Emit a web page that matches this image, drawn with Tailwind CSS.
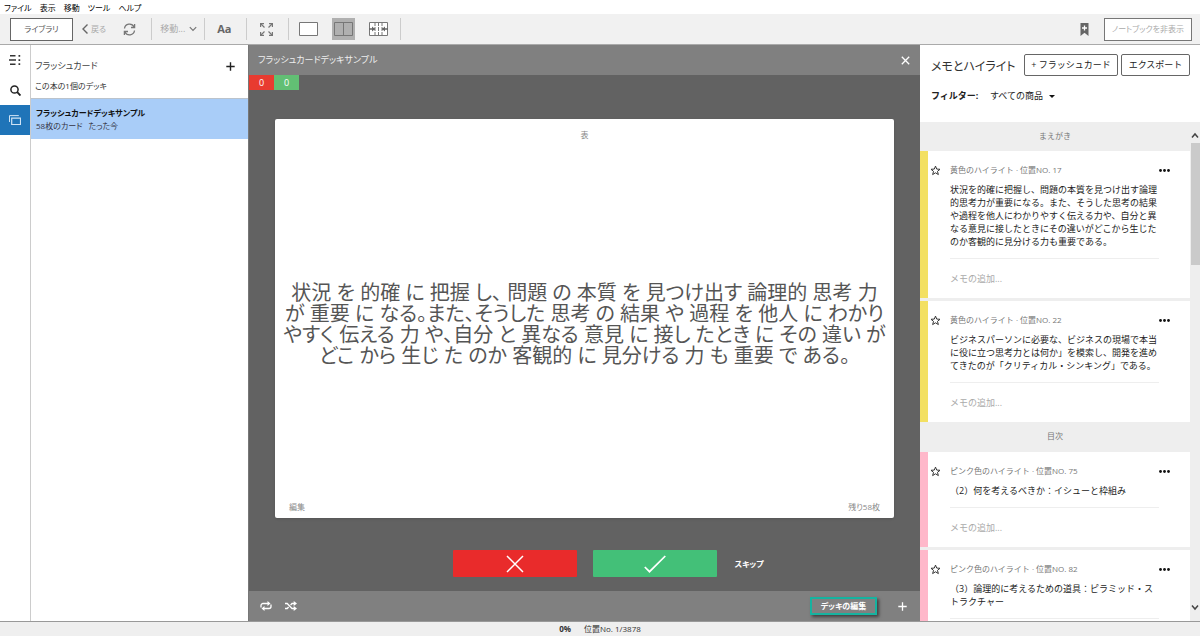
<!DOCTYPE html>
<html lang="ja">
<head>
    <meta charset="UTF-8">
    <meta name="viewport" content="width=device-width, initial-scale=1.0">
    <title>フラッシュカードデッキサンプル</title>
    <script src="https://cdn.jsdelivr.net/npm/@tailwindcss/browser@4"></script>
</head>
<body class="h-screen flex flex-col overflow-hidden bg-white text-[#333] text-[9px] leading-[14px] font-['Open_Sans','Noto_Sans_CJK_JP',sans-serif] [font-feature-settings:'palt']">

    <!-- Menu bar -->
    <nav class="h-[14px] shrink-0 flex items-center gap-2 px-1 pt-[2px] text-[8px] text-black">
        <button type="button">ファイル</button>
        <button type="button">表示</button>
        <button type="button">移動</button>
        <button type="button">ツール</button>
        <button type="button">ヘルプ</button>
    </nav>

    <!-- Toolbar -->
    <header class="h-[31px] shrink-0 flex items-center bg-[#f1f1f1] border-b border-[#aaa] pl-[10px] pr-2">
        <button type="button" class="w-[63px] h-[23px] border border-[#666] bg-white text-[8px] text-[#555]">ライブラリ</button>
        <button type="button" class="ml-2 flex items-center gap-[2px] text-[8px] text-[#aaa]">
            <svg class="w-2 h-3" viewBox="0 0 8 12" fill="none" stroke="#666" stroke-width="1.4"><path d="M6.5 1.5 2 6l4.500 4.500"/></svg>
            戻る
        </button>
        <button type="button" aria-label="同期" class="ml-[17px]">
            <svg class="w-[13px] h-[13px]" viewBox="0 0 13 13" fill="none" stroke="#777" stroke-width="1.300"><path d="M1.500 5.500A5 5 0 0 1 11 4M11.500 7.500A5 5 0 0 1 2 9"/><path d="M11.600 1v3.500H8M1.400 12V8.500H5"/></svg>
        </button>
        <span class="ml-[15px] w-px h-[22px] bg-[#ccc]"></span>
        <button type="button" aria-haspopup="menu" class="ml-2 flex items-center gap-1 text-[#aaa]">
            移動...
            <svg class="w-2 h-2" viewBox="0 0 8 8" fill="none" stroke="#777" stroke-width="1.200"><path d="M.8 2.200 4 5.500l3.200-3.300"/></svg>
        </button>
        <span class="ml-[7px] w-px h-[22px] bg-[#ccc]"></span>
        <button type="button" class="ml-3 text-[11px] font-bold text-[#666]">Aa</button>
        <span class="ml-[14px] w-px h-[22px] bg-[#ccc]"></span>
        <button type="button" aria-label="全画面表示" class="ml-[13px]">
            <svg class="w-[13px] h-[13px]" viewBox="0 0 13 13" fill="none" stroke="#777" stroke-width="1.200"><path d="m1 1 3.500 3.500M12 1 8.500 4.500M12 12 8.500 8.500M1 12l3.500-3.500"/><path d="M5 2v3H2M8 2v3h3M8 11V8h3M5 11V8H2" stroke="none"/><path d="M.6 4V.6H4M9 .6h3.400V4M12.400 9v3.400H9M4 12.400H.6V9"/></svg>
        </button>
        <span class="ml-[15px] w-px h-[22px] bg-[#ccc]"></span>
        <button type="button" aria-label="1列" class="ml-[10px]">
            <svg class="w-[19px] h-[14px]" viewBox="0 0 19 14" fill="#fff" stroke="#777"><path d="M.5.5h18v13H.5z"/></svg>
        </button>
        <button type="button" aria-label="2列" class="ml-[14px] w-[23px] h-[22px] flex items-center justify-center bg-[#b0b0b0]">
            <svg class="w-[19px] h-[14px]" viewBox="0 0 19 14" fill="none" stroke="#777"><path d="M.5.5h18v13H.5zM9.500.5v13"/></svg>
        </button>
        <button type="button" aria-label="自動" class="ml-[14px]">
            <svg class="w-[19px] h-[14px]" viewBox="0 0 19 14" fill="none" stroke="#777"><path d="M.5.5h18v13H.5z" fill="#fff"/><path d="M6 0v14M9.500 0v14M13 0v14" stroke-dasharray="4 1"/><path d="M0 7h6M13 7h6" stroke="#666" stroke-width="1.300"/><path d="M3 4.500 6 7 3 9.500zM16 4.500 13 7l3 2.500z" fill="#666" stroke="none"/></svg>
        </button>
        <span class="ml-3 w-px h-[22px] bg-[#ccc]"></span>
        <button type="button" aria-label="ブックマーク" class="ml-auto">
            <svg class="w-[9px] h-[13px]" viewBox="0 0 9 13"><path d="M.5 0h8v13l-4-3.200L.5 13z" fill="#666"/><path d="M4.500 2.500v5M2 5h5" stroke="#fff" stroke-width="1.300"/></svg>
        </button>
        <button type="button" class="ml-[15px] w-[88px] h-[23px] border border-[#777] bg-white text-[8px] text-[#aaa]">ノートブックを非表示</button>
    </header>

    <main class="flex-1 min-h-0 flex">
        <!-- Icon rail -->
        <nav class="w-[31px] shrink-0 flex flex-col border-r border-[#ccc]">
            <button type="button" aria-label="目次" class="h-[30px] flex items-center justify-center">
                <svg class="w-3 h-[10px]" viewBox="0 0 12 10" fill="#333"><path d="M1 0h5.500v1.500H1zM0 4.200h7v1.500H0zM1 8.400h5.500v1.500H1zM9.500 0h1.700v1.700H9.500zM9.500 4.200h1.700v1.700H9.500zM9.500 8.300h1.700V10H9.500z"/></svg>
            </button>
            <button type="button" aria-label="検索" class="h-[30px] flex items-center justify-center">
                <svg class="w-[11px] h-[11px]" viewBox="0 0 11 11" fill="none" stroke="#222" stroke-width="1.500"><circle cx="4.500" cy="4.500" r="3.600"/><path d="m7.200 7.200 3.300 3.300" stroke-width="1.900"/></svg>
            </button>
            <button type="button" aria-label="フラッシュカード" class="h-[30px] flex items-center justify-center bg-[#1f74b8]">
                <svg class="w-3 h-[10px]" viewBox="0 0 12 10" fill="none" stroke="#cfe3f5"><path d="M2.700 3.200h8.800v6.300H2.700z" stroke-width="1.200"/><path d="M.5 7V.6h9.300"/></svg>
            </button>
        </nav>

        <!-- Deck list -->
        <aside class="w-[218px] shrink-0 flex flex-col border-r border-[#777]">
            <div class="h-[53px] px-1 pt-[14px]">
                <div class="flex items-center justify-between pr-[9px]">
                    <h2 class="text-[9px] text-[#444]">フラッシュカード</h2>
                    <button type="button" aria-label="デッキを追加">
                        <svg class="w-[9px] h-[9px]" viewBox="0 0 9 9" stroke="#222" stroke-width="1.400"><path d="M4.500.3v8.400M.3 4.500h8.400"/></svg>
                    </button>
                </div>
                <p class="mt-[6px] text-[8px]">この本の1個のデッキ</p>
            </div>
            <a href="#deck" class="h-[41px] block bg-[#a9cdf8] border-t border-[#bbc3cc] px-[5px] pt-[7px] leading-[13px]">
                <strong class="block text-[8px] font-bold text-[#111]">フラッシュカードデッキサンプル</strong>
                <span class="flex gap-[6px] text-[8px] text-[#334]"><span>58枚のカード</span><span>たった今</span></span>
            </a>
        </aside>

        <!-- Flashcard -->
        <section id="deck" class="flex-1 min-w-0 flex flex-col bg-[#626262]">
            <div class="h-[30px] shrink-0 flex items-center justify-between bg-[#808080] pl-[9px] pr-[10px] text-[#eee]">
                <h1 class="text-[9px]">フラッシュカードデッキサンプル</h1>
                <button type="button" aria-label="閉じる">
                    <svg class="w-[9px] h-[9px]" viewBox="0 0 9 9" stroke="#fff" stroke-width="1.300"><path d="m.8.8 7.400 7.400M8.200.8.8 8.200"/></svg>
                </button>
            </div>
            <div class="flex h-[15px] shrink-0 text-white text-center leading-[15px]">
                <span class="w-[25px] bg-[#e83b30]">0</span>
                <span class="w-[25px] bg-[#62bf74]">0</span>
            </div>
            <article class="flex-1 min-h-0 mt-[29px] mx-[26px] flex flex-col rounded-xs bg-white px-[14px] pt-[9px] pb-1 shadow-sm text-[8px] text-[#888]">
                <p class="text-center">表</p>
                <p class="flex-1 flex items-center justify-center pt-[6px] text-center text-[20px] leading-[21px] text-[#555] whitespace-nowrap">
                    <span>状況 を 的確 に 把握 し、 問題 の 本質 を 見つけ出す 論理的 思考 力<br>が 重要 に なる。また、そうした 思考 の 結果 や 過程 を 他人 に わかり<br>やすく 伝える 力 や、自分 と 異なる 意見 に 接し たとき に その 違い が<br>どこ から 生じ た のか 客観的 に 見分ける 力 も 重要 で ある。</span>
                </p>
                <div class="flex justify-between">
                    <button type="button">編集</button>
                    <span>残り58枚</span>
                </div>
            </article>
            <div class="mt-8 mb-[14px] h-[27px] shrink-0 grid grid-cols-[1fr_auto_1fr] items-center">
                <div class="col-start-2 flex gap-4">
                    <button type="button" aria-label="不正解" class="w-[124px] h-[27px] flex items-center justify-center rounded-[1px] bg-[#e92b2b]">
                        <svg class="w-[18px] h-[18px]" viewBox="0 0 18 18" stroke="#fff" stroke-width="1.500"><path d="m1 1 16 16M17 1 1 17"/></svg>
                    </button>
                    <button type="button" aria-label="正解" class="w-[124px] h-[27px] flex items-center justify-center rounded-[1px] bg-[#43c078]">
                        <svg class="w-[22px] h-[18px]" viewBox="0 0 22 18" fill="none" stroke="#fff" stroke-width="1.700"><path d="m.8 12 4.700 4.700L21.300 1"/></svg>
                    </button>
                </div>
                <button type="button" class="justify-self-start ml-[18px] text-[8px] font-bold text-white">スキップ</button>
            </div>
            <div class="h-[30px] shrink-0 flex items-center bg-[#808080] pl-[11px] pr-[13px]">
                <button type="button" aria-label="繰り返し">
                    <svg class="w-3 h-[10px]" viewBox="0 0 12 10" fill="none" stroke="#fff" stroke-width="1.300"><path d="M1 6.500V4.500a2 2 0 0 1 2-2h5M11 3.500v2a2 2 0 0 1-2 2H4"/><path d="M7.500 0 10.500 2.500 7.500 5zM4.500 5 1.500 7.500l3 2.500z" fill="#fff" stroke="none"/></svg>
                </button>
                <button type="button" aria-label="シャッフル" class="ml-[13px]">
                    <svg class="w-3 h-[10px]" viewBox="0 0 12 10" fill="none" stroke="#fff" stroke-width="1.300"><path d="M0 2.500h2.200L7 7.500h2M0 7.500h2.200L3.600 6M5.600 4 7 2.500h2"/><path d="m8.700 0 3.300 2.500L8.700 5zM8.700 5 12 7.500 8.700 10z" fill="#fff" stroke="none"/></svg>
                </button>
                <button type="button" class="ml-auto w-[67px] h-[18px] border-2 border-[#16b3a0] shadow-[2px_2px_3px_rgba(0,0,0,0.5)] text-[8px] font-bold leading-[14px] text-white">デッキの編集</button>
                <button type="button" aria-label="カードを追加" class="ml-[21px]">
                    <svg class="w-[9px] h-[9px]" viewBox="0 0 9 9" stroke="#fff" stroke-width="1.300"><path d="M4.500.3v8.400M.3 4.500h8.400"/></svg>
                </button>
            </div>
        </section>

        <!-- Notebook -->
        <aside class="w-[280px] shrink-0 flex flex-col [font-feature-settings:normal]">
            <div class="h-[77px] shrink-0 pl-[11px] pr-[10px] pt-[9px]">
                <div class="flex items-center gap-[3px]">
                    <h2 class="flex-1 pt-[3px] text-[12px] text-[#333] whitespace-nowrap [font-feature-settings:'palt']">メモとハイライト</h2>
                    <button type="button" class="w-[94px] h-[22px] rounded-[2px] border border-[#666] text-[9px] text-[#222]">+ フラッシュカード</button>
                    <button type="button" class="w-[69px] h-[22px] rounded-[2px] border border-[#666] text-[9px] text-[#222]">エクスポート</button>
                </div>
                <div class="mt-[13px] flex items-center text-[9px] text-[#222]">
                    <label for="filter" class="w-[59px] font-bold">フィルター:</label>
                    <select id="filter" class="appearance-none h-[14px]">
                        <option>すべての商品</option>
                    </select>
                    <svg class="ml-1 w-[6px] h-[3px]" viewBox="0 0 6 3" fill="#111"><path d="M0 0h6L3 3z"/></svg>
                </div>
            </div>

            <div class="flex-1 min-h-0 flex bg-[#eee]">
                <div class="flex-1 min-w-0 overflow-hidden">
                    <h3 class="h-[29px] leading-[28px] text-center text-[8px] text-[#777]">まえがき</h3>
                    <div class="flex flex-col gap-[3px]">
                        <article class="flex items-start border-l-8 border-[#f3e062] bg-white pl-[2px] pr-5 pt-3 pb-3">
                            <button type="button" aria-label="お気に入り" class="w-5 pt-[2px]">
                                <svg class="w-[11px] h-[11px]" viewBox="0 0 10 10" fill="none" stroke="#333" stroke-width=".9"><path d="m5 1 1.100 2.700 3 .2-2.300 1.900.8 2.900L5 7.100 2.400 8.700l.8-2.900L.9 3.900l3-.2z"/></svg>
                            </button>
                            <div class="w-[209px]">
                                <p class="text-[8px] text-[#777]">黄色のハイライト · 位置NO. 17</p>
                                <p class="mt-[6px] leading-[13px] text-[#222]">状況を的確に把握し、問題の本質を見つけ出す論理的思考力が重要になる。また、そうした思考の結果や過程を他人にわかりやすく伝える力や、自分と異なる意見に接したときにその違いがどこから生じたのか客観的に見分ける力も重要である。</p>
                                <input type="text" aria-label="メモ" placeholder="メモの追加..." class="block w-full mt-[10px] pt-3 h-[28px] border-t border-[#eee] placeholder:text-[#aaa] outline-none">
                            </div>
                            <button type="button" aria-label="その他" class="ml-auto pt-[6px]">
                                <svg class="w-[11px] h-[3px]" viewBox="0 0 11 3" fill="#111"><circle cx="1.500" cy="1.500" r="1.400"/><circle cx="5.500" cy="1.500" r="1.400"/><circle cx="9.500" cy="1.500" r="1.400"/></svg>
                            </button>
                        </article>
                        <article class="flex items-start border-l-8 border-[#f3e062] bg-white pl-[2px] pr-5 pt-3 pb-3">
                            <button type="button" aria-label="お気に入り" class="w-5 pt-[2px]">
                                <svg class="w-[11px] h-[11px]" viewBox="0 0 10 10" fill="none" stroke="#333" stroke-width=".9"><path d="m5 1 1.100 2.700 3 .2-2.300 1.900.8 2.900L5 7.100 2.400 8.700l.8-2.900L.9 3.900l3-.2z"/></svg>
                            </button>
                            <div class="w-[209px]">
                                <p class="text-[8px] text-[#777]">黄色のハイライト · 位置NO. 22</p>
                                <p class="mt-[6px] leading-[13px] text-[#222]">ビジネスパーソンに必要な、ビジネスの現場で本当に役に立つ思考力とは何か」を模索し、開発を進めてきたのが「クリティカル・シンキング」である。</p>
                                <input type="text" aria-label="メモ" placeholder="メモの追加..." class="block w-full mt-[10px] pt-3 h-[28px] border-t border-[#eee] placeholder:text-[#aaa] outline-none">
                            </div>
                            <button type="button" aria-label="その他" class="ml-auto pt-[6px]">
                                <svg class="w-[11px] h-[3px]" viewBox="0 0 11 3" fill="#111"><circle cx="1.500" cy="1.500" r="1.400"/><circle cx="5.500" cy="1.500" r="1.400"/><circle cx="9.500" cy="1.500" r="1.400"/></svg>
                            </button>
                        </article>
                    </div>
                    <h3 class="h-[30px] leading-[28px] text-center text-[8px] text-[#777]">目次</h3>
                    <div class="flex flex-col gap-[3px]">
                        <article class="flex items-start border-l-8 border-[#ffb8ca] bg-white pl-[2px] pr-5 pt-3 pb-3">
                            <button type="button" aria-label="お気に入り" class="w-5 pt-[2px]">
                                <svg class="w-[11px] h-[11px]" viewBox="0 0 10 10" fill="none" stroke="#333" stroke-width=".9"><path d="m5 1 1.100 2.700 3 .2-2.300 1.900.8 2.900L5 7.100 2.400 8.700l.8-2.900L.9 3.900l3-.2z"/></svg>
                            </button>
                            <div class="w-[209px]">
                                <p class="text-[8px] text-[#777]">ピンク色のハイライト · 位置NO. 75</p>
                                <p class="mt-[6px] leading-[13px] text-[#222]">（2）何を考えるべきか：イシューと枠組み</p>
                                <input type="text" aria-label="メモ" placeholder="メモの追加..." class="block w-full mt-[10px] pt-3 h-[28px] border-t border-[#eee] placeholder:text-[#aaa] outline-none">
                            </div>
                            <button type="button" aria-label="その他" class="ml-auto pt-[6px]">
                                <svg class="w-[11px] h-[3px]" viewBox="0 0 11 3" fill="#111"><circle cx="1.500" cy="1.500" r="1.400"/><circle cx="5.500" cy="1.500" r="1.400"/><circle cx="9.500" cy="1.500" r="1.400"/></svg>
                            </button>
                        </article>
                        <article class="flex items-start border-l-8 border-[#ffb8ca] bg-white pl-[2px] pr-5 pt-3 pb-3">
                            <button type="button" aria-label="お気に入り" class="w-5 pt-[2px]">
                                <svg class="w-[11px] h-[11px]" viewBox="0 0 10 10" fill="none" stroke="#333" stroke-width=".9"><path d="m5 1 1.100 2.700 3 .2-2.300 1.900.8 2.900L5 7.100 2.400 8.700l.8-2.900L.9 3.900l3-.2z"/></svg>
                            </button>
                            <div class="w-[209px]">
                                <p class="text-[8px] text-[#777]">ピンク色のハイライト · 位置NO. 82</p>
                                <p class="mt-[6px] leading-[13px] text-[#222]">（3）論理的に考えるための道具：ピラミッド・ストラクチャー</p>
                                <input type="text" aria-label="メモ" placeholder="メモの追加..." class="block w-full mt-[10px] pt-3 h-[28px] border-t border-[#eee] placeholder:text-[#aaa] outline-none">
                            </div>
                            <button type="button" aria-label="その他" class="ml-auto pt-[6px]">
                                <svg class="w-[11px] h-[3px]" viewBox="0 0 11 3" fill="#111"><circle cx="1.500" cy="1.500" r="1.400"/><circle cx="5.500" cy="1.500" r="1.400"/><circle cx="9.500" cy="1.500" r="1.400"/></svg>
                            </button>
                        </article>
                    </div>
                </div>
                <!-- Scrollbar -->
                <div class="w-[10px] shrink-0 flex flex-col items-center pt-[10px] pb-[10px]">
                    <svg class="w-2 h-[7px] shrink-0" viewBox="0 0 8 7" fill="none" stroke="#444" stroke-width="1.500"><path d="M1 5.500 4 2l3 3.500"/></svg>
                    <div class="mt-1 w-[9px] h-[122px] shrink-0 bg-[#cacaca]"></div>
                    <svg class="mt-auto w-2 h-[7px] shrink-0" viewBox="0 0 8 7" fill="none" stroke="#444" stroke-width="1.500"><path d="M1 1.500 4 5l3-3.500"/></svg>
                </div>
            </div>
        </aside>
    </main>

    <footer class="h-[15px] shrink-0 flex items-center justify-center gap-[13px] bg-[#efefef] border-t border-[#999] text-[8px]">
        <strong class="font-bold">0%</strong>
        <span>位置No. 1/3878</span>
    </footer>
</body>
</html>
